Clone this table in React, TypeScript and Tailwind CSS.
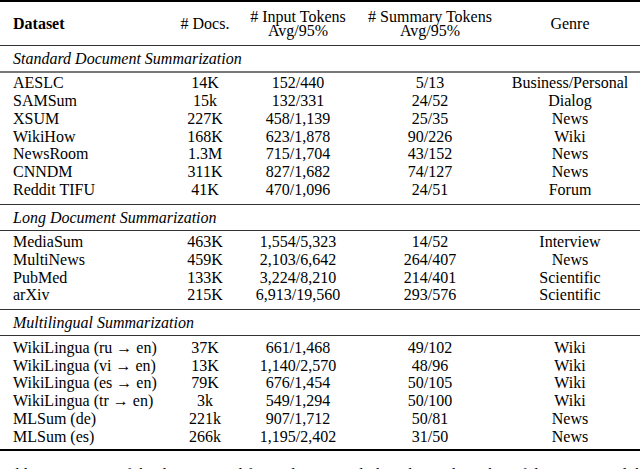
import React from 'react';

type Row = [string, string, string, string, string];

const sections: { title: string; rows: Row[] }[] = [
  {
    title: 'Standard Document Summarization',
    rows: [
      ['AESLC', '14K', '152/440', '5/13', 'Business/Personal'],
      ['SAMSum', '15k', '132/331', '24/52', 'Dialog'],
      ['XSUM', '227K', '458/1,139', '25/35', 'News'],
      ['WikiHow', '168K', '623/1,878', '90/226', 'Wiki'],
      ['NewsRoom', '1.3M', '715/1,704', '43/152', 'News'],
      ['CNNDM', '311K', '827/1,682', '74/127', 'News'],
      ['Reddit TIFU', '41K', '470/1,096', '24/51', 'Forum'],
    ],
  },
  {
    title: 'Long Document Summarization',
    rows: [
      ['MediaSum', '463K', '1,554/5,323', '14/52', 'Interview'],
      ['MultiNews', '459K', '2,103/6,642', '264/407', 'News'],
      ['PubMed', '133K', '3,224/8,210', '214/401', 'Scientific'],
      ['arXiv', '215K', '6,913/19,560', '293/576', 'Scientific'],
    ],
  },
  {
    title: 'Multilingual Summarization',
    rows: [
      ['WikiLingua (ru → en)', '37K', '661/1,468', '49/102', 'Wiki'],
      ['WikiLingua (vi → en)', '13K', '1,140/2,570', '48/96', 'Wiki'],
      ['WikiLingua (es → en)', '79K', '676/1,454', '50/105', 'Wiki'],
      ['WikiLingua (tr → en)', '3k', '549/1,294', '50/100', 'Wiki'],
      ['MLSum (de)', '221k', '907/1,712', '50/81', 'News'],
      ['MLSum (es)', '266k', '1,195/2,402', '31/50', 'News'],
    ],
  },
];

const cols = 'grid grid-cols-[168px_74px_112px_152px_128px]';

function DataRow({ row }: { row: Row }) {
  return (
    <div className={`${cols} h-[17.75px] leading-[17.75px]`}>
      <div className="pl-[13px] whitespace-nowrap">{row[0]}</div>
      <div className="text-center">{row[1]}</div>
      <div className="text-center">{row[2]}</div>
      <div className="text-center">{row[3]}</div>
      <div className="text-center whitespace-nowrap">{row[4]}</div>
    </div>
  );
}

export default function App() {
  return (
    <div className="w-[640px] h-[469px] overflow-hidden bg-white text-black font-['Liberation_Serif',serif] text-[16px]">
      <div className="h-[2px] bg-black" />
      {/* header */}
      <div className={`${cols} h-[43px] items-center leading-[14px]`}>
        <div className="pl-[13px] font-bold">Dataset</div>
        <div className="text-center"># Docs.</div>
        <div className="text-center">
          # Input Tokens
          <br />
          Avg/95%
        </div>
        <div className="text-center">
          # Summary Tokens
          <br />
          Avg/95%
        </div>
        <div className="text-center">Genre</div>
      </div>

      {sections.map((s, i) => (
        <div key={s.title}>
          <div className="h-px bg-[#333]" />
          <div className="pl-[13px] pt-[4px] pb-[3.5px] italic leading-[17.7px] h-[25.2px]">{s.title}</div>
          <div className={i === 0 ? 'h-[2px] bg-[#777]' : 'h-px bg-[#333]'} />
          <div
            className={
              i === 0 ? 'pt-[1.2px] pb-[5px]' : i === 1 ? 'pt-[2.2px] pb-[5px]' : 'pt-[2.6px] pb-[3.6px]'
            }
          >
            {s.rows.map((r) => (
              <DataRow key={r[0]} row={r} />
            ))}
          </div>
        </div>
      ))}

      <div className="h-[2px] bg-black" />
      <p className="mt-[15px] whitespace-nowrap leading-[17.7px]">
        Table 2: Statistics of the datasets used for evaluation including the total number of documents and the
      </p>
    </div>
  );
}
